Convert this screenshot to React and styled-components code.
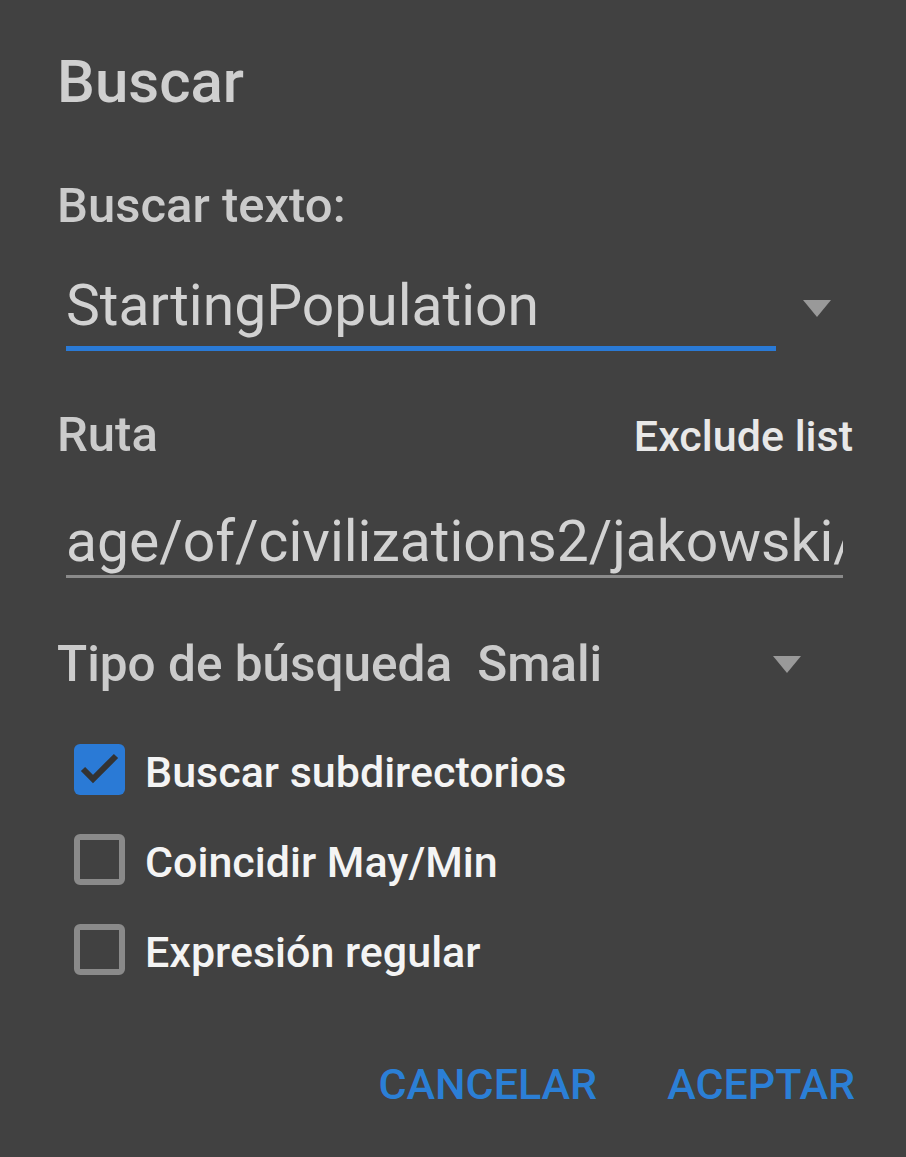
import React from 'react';
import styled, { createGlobalStyle } from 'styled-components';

const GlobalStyle = createGlobalStyle`
  html, body {
    margin: 0;
    padding: 0;
    background: #414141;
    min-height: 100%;
  }
  body {
    font-family: Roboto, "Noto Sans", sans-serif;
  }
`;

const Dialog = styled.div`
  display: flex;
  flex-direction: column;
  min-height: 1157px;
  box-sizing: border-box;
  padding: 47px 51px 0 57px;
  background: #414141;
`;

const Title = styled.h1`
  margin: 0;
  font-size: 60px;
  line-height: 70px;
  font-weight: 500;
  color: #cfcfcf;
`;

const Label = styled.div`
  margin-top: 61px;
  font-size: 49px;
  line-height: 56px;
  font-weight: 500;
  color: #cbcbcb;
`;

const SpinnerRow = styled.div`
  display: flex;
  align-items: center;
  margin-top: 39px;
`;

const Field = styled.div`
  box-sizing: border-box;
  margin-left: 9px;
  width: ${props => props.width}px;
  padding-bottom: ${props => props.pad}px;
  border-bottom: ${props => props.line}px solid ${props => props.color};
  font-size: 57px;
  line-height: 66px;
  color: #d2d2d2;
  white-space: nowrap;
  overflow: hidden;
`;

const Arrow = styled.span`
  width: 0;
  height: 0;
  margin-left: ${props => props.left}px;
  margin-top: ${props => props.shift}px;
  border-left: 14.5px solid transparent;
  border-right: 14.5px solid transparent;
  border-top: 17px solid #999999;
`;

const PathHeader = styled.div`
  display: flex;
  justify-content: space-between;
  align-items: baseline;
  margin-top: 56px;
  line-height: 56px;
  font-weight: 500;
`;

const RutaText = styled.span`
  font-size: 49px;
  color: #cbcbcb;
`;

const ExcludeLink = styled.span`
  font-size: 43px;
  color: #e8e8e8;
  margin-right: 2px;
`;

const PathWrap = styled.div`
  margin-top: 45px;
`;

const TypeRow = styled.div`
  display: flex;
  align-items: center;
  margin-top: 58px;
  font-size: 49.5px;
  line-height: 56px;
  font-weight: 500;
  color: #cbcbcb;
`;

const TypeValue = styled.span`
  margin-left: 25px;
  width: 296px;
`;

const Options = styled.div`
  display: flex;
  flex-direction: column;
  margin-top: 35px;
  margin-left: 17px;
`;

const OptionRow = styled.label`
  display: flex;
  align-items: center;
  height: 90px;
  gap: 20px;
  font-size: 43px;
  font-weight: 500;
  color: #f4f4f4;
`;

const Box = styled.span`
  box-sizing: border-box;
  width: 51px;
  height: 51px;
  margin-top: -5px;
  border-radius: 6px;
  display: flex;
  align-items: center;
  justify-content: center;
  background: ${props => (props.checked ? '#2a7ad6' : 'transparent')};
  border: ${props => (props.checked ? 'none' : '6px solid #8a8a8a')};
`;

const Actions = styled.div`
  display: flex;
  justify-content: flex-end;
  gap: 70px;
  margin-top: 61px;
`;

const ActionBtn = styled.button`
  padding: 0;
  border: none;
  background: none;
  font-family: Roboto, sans-serif;
  font-size: 43px;
  line-height: 52px;
  font-weight: 500;
  color: #2b7fd6;
  text-transform: uppercase;
`;

const options = [
  { name: 'Buscar subdirectorios', checked: true },
  { name: 'Coincidir May/Min', checked: false },
  { name: 'Expresión regular', checked: false }
];

const Check = () => (
  <svg width="51" height="51" viewBox="0 0 51 51">
    <polyline points="9,25 19,35 42,12" fill="none" stroke="#333" strokeWidth="6" />
  </svg>
);

export default function App() {
  return (
    <Dialog>
      <GlobalStyle />
      <Title>Buscar</Title>
      <Label>Buscar texto:</Label>
      <SpinnerRow>
        <Field width={710} pad={7} line={5} color="#2a7ad6">StartingPopulation</Field>
        <Arrow left={27} shift={-8} />
      </SpinnerRow>
      <PathHeader>
        <RutaText>Ruta</RutaText>
        <ExcludeLink>Exclude list</ExcludeLink>
      </PathHeader>
      <PathWrap>
        <Field width={777} pad={0} line={3} color="#8a8a8a">age/of/civilizations2/jakowski/</Field>
      </PathWrap>
      <TypeRow>
        <span>Tipo de búsqueda</span>
        <TypeValue>Smali</TypeValue>
        <Arrow left={0} shift={0} />
      </TypeRow>
      <Options>
        {options.map(opt => (
          <OptionRow key={opt.name}>
            <Box checked={opt.checked}>{opt.checked && <Check />}</Box>
            {opt.name}
          </OptionRow>
        ))}
      </Options>
      <Actions>
        <ActionBtn>Cancelar</ActionBtn>
        <ActionBtn>Aceptar</ActionBtn>
      </Actions>
    </Dialog>
  );
}
